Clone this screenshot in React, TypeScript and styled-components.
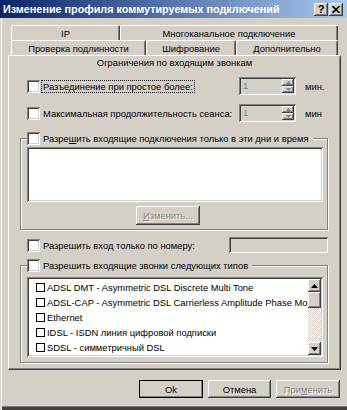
import React from "react";
import styled, { createGlobalStyle } from "styled-components";

const face = "#d4d0c8";
const shade = "#808080";
const dark = "#404040";

const raised = `inset -1px -1px ${dark}, inset 1px 1px #fff, inset -2px -2px ${shade}, inset 2px 2px ${face}`;
const sunken = `inset 1px 1px ${shade}, inset -1px -1px #fff, inset 2px 2px ${dark}, inset -2px -2px ${face}`;

const GlobalStyle = createGlobalStyle`
  html, body {
    margin: 0;
    padding: 0;
    background: ${face};
  }
  body {
    font-family: "Liberation Sans", Arial, sans-serif;
    font-size: 9.4px;
    color: #000;
  }
  * {
    box-sizing: border-box;
  }
`;

const Window = styled.div`
  width: 347px;
  height: 410px;
  background: ${face};
  display: flex;
  flex-direction: column;
  box-shadow: inset 1px 0 ${face}, inset 2px 0 #fff, inset 0 -3px ${dark},
    inset 0 -4px ${shade};
`;

const TitleBar = styled.div`
  height: 18px;
  flex: none;
  display: flex;
  align-items: center;
  padding: 0 4px 0 3px;
  background: linear-gradient(to right, #0a246a, #a6caf0);
`;

const Title = styled.span`
  flex: 1;
  color: #fff;
  font-weight: bold;
  font-size: 10.8px;
  white-space: nowrap;
`;

const CaptionButton = styled.div`
  width: 14px;
  height: 13px;
  margin-left: 1px;
  background: ${face};
  box-shadow: ${raised};
  display: flex;
  align-items: center;
  justify-content: center;
  font-weight: bold;
  font-size: 11px;
  line-height: 1;
`;

const Body = styled.div`
  flex: 1;
  display: flex;
  flex-direction: column;
  padding: 7px 6px 0 8px;
`;

const TabRow = styled.div<{ $inset: number; $h: number }>`
  display: flex;
  height: ${(p) => p.$h}px;
  margin: 0 ${(p) => p.$inset}px;
`;

const Tab = styled.div<{ $w?: number }>`
  width: ${(p) => (p.$w ? `${p.$w}px` : "auto")};
  flex: ${(p) => (p.$w ? "none" : "1")};
  display: flex;
  align-items: center;
  justify-content: center;
  border-top: 1px solid #fff;
  border-left: 1px solid #fff;
  border-right: 1px solid ${dark};
  border-radius: 2px 2px 0 0;
  box-shadow: inset -1px 0 ${shade};
  white-space: nowrap;
`;

const Panel = styled.div`
  height: 301px;
  flex: none;
  display: flex;
  flex-direction: column;
  padding: 8px 12px 0 11px;
  border-left: 1px solid #fff;
  border-right: 1px solid ${dark};
  border-bottom: 1px solid ${dark};
  box-shadow: inset -1px -1px ${shade};
`;

const FieldRow = styled.div<{ $mt: number; $h: number }>`
  display: flex;
  align-items: center;
  height: ${(p) => p.$h}px;
  margin-top: ${(p) => p.$mt}px;
  padding-left: 7px;
  white-space: nowrap;
`;

const Check = styled.span`
  width: 13px;
  height: 13px;
  flex: none;
  background: #fff;
  box-shadow: ${sunken};
`;

const Label = styled.span<{ $focus?: boolean }>`
  margin-left: 1px;
  padding: 0 1px;
  line-height: 11px;
  border: 1px dotted ${(p) => (p.$focus ? "#000" : "transparent")};
`;

const Spin = styled.div`
  width: 57px;
  height: 18px;
  margin-left: auto;
  padding: 2px;
  display: flex;
  background: ${face};
  box-shadow: ${sunken};
`;

const SpinValue = styled.span`
  flex: 1;
  color: ${shade};
  padding-left: 2px;
  line-height: 14px;
`;

const SpinButtons = styled.div`
  width: 12px;
  display: flex;
  flex-direction: column;
`;

const SpinButton = styled.div`
  flex: 1;
  background: ${face};
  box-shadow: ${raised};
  display: flex;
  align-items: center;
  justify-content: center;
`;

const Unit = styled.span`
  width: 23px;
  margin-left: 9px;
`;

const Group = styled.fieldset<{ $mt: number; $pt: number; $pb: number }>`
  margin: ${(p) => p.$mt}px 0 0;
  padding: ${(p) => p.$pt}px 4px ${(p) => p.$pb}px 6px;
  min-width: 0;
  border: 1px solid ${shade};
  box-shadow: inset 1px 1px #fff, 1px 1px #fff;
`;

const GroupLegend = styled.legend`
  margin: 0;
  padding: 0 2px 0 0;
  height: 13px;
  display: flex;
  align-items: center;
  background: ${face};
  white-space: nowrap;
`;

const WhiteBox = styled.div<{ $h: number }>`
  height: ${(p) => p.$h}px;
  background: #fff;
  box-shadow: ${sunken};
`;

const PushButton = styled.div<{ $w: number; $h: number; $disabled?: boolean; $default?: boolean }>`
  width: ${(p) => p.$w}px;
  height: ${(p) => p.$h}px;
  flex: none;
  display: flex;
  align-items: center;
  justify-content: center;
  background: ${face};
  color: ${(p) => (p.$disabled ? shade : "#000")};
  text-shadow: ${(p) => (p.$disabled ? "1px 1px #fff" : "none")};
  box-shadow: ${(p) => (p.$default ? `inset 0 0 0 1px #000, ` : "")}${raised};
  white-space: nowrap;
`;

const ChangeButton = styled(PushButton)`
  margin: 4px 0 0 109px;
`;

const NumberField = styled.div`
  width: 99px;
  height: 16px;
  margin-left: auto;
  background: ${face};
  box-shadow: ${sunken};
`;

const TypeList = styled.div`
  height: 80px;
  display: flex;
  padding: 2px;
  background: #fff;
  box-shadow: ${sunken};
`;

const TypeItems = styled.div`
  flex: 1;
  min-width: 0;
  overflow: hidden;
  padding: 1px 0 0 7px;
`;

const TypeItem = styled.div`
  height: 15px;
  display: flex;
  align-items: center;
  white-space: nowrap;
`;

const ItemBox = styled.span`
  width: 9px;
  height: 9px;
  margin-right: 2px;
  flex: none;
  border: 1px solid #000;
`;

const ScrollBar = styled.div`
  width: 13px;
  flex: none;
  display: flex;
  flex-direction: column;
`;

const ScrollButton = styled.div<{ $h: number }>`
  height: ${(p) => p.$h}px;
  flex: none;
  background: ${face};
  box-shadow: ${raised};
  display: flex;
  align-items: center;
  justify-content: center;
`;

const ScrollTrack = styled.div`
  flex: 1;
  background: repeating-conic-gradient(#fff 0 25%, ${face} 0 50%) 0 0 / 2px 2px;
`;

const ButtonBar = styled.div`
  display: flex;
  justify-content: flex-end;
  gap: 5px;
  margin-top: 10px;
  padding-right: 1px;
`;

const Arrow = ({ up }: { up?: boolean }) => (
  <svg width="7" height="4" viewBox="0 0 7 4">
    <polygon points={up ? "3.5,0 7,4 0,4" : "0,0 7,0 3.5,4"} fill="#000" />
  </svg>
);

const SmallArrow = ({ up }: { up?: boolean }) => (
  <svg width="5" height="3" viewBox="0 0 5 3">
    <polygon points={up ? "2.5,0 5,3 0,3" : "0,0 5,0 2.5,3"} fill={shade} />
  </svg>
);

const SpinBox: React.FC = () => (
  <Spin>
    <SpinValue>1</SpinValue>
    <SpinButtons>
      <SpinButton>
        <SmallArrow up />
      </SpinButton>
      <SpinButton>
        <SmallArrow />
      </SpinButton>
    </SpinButtons>
  </Spin>
);

const types = [
  "ADSL DMT - Asymmetric DSL Discrete Multi Tone",
  "ADSL-CAP - Asymmetric DSL Carrierless Amplitude Phase Modulation",
  "Ethernet",
  "IDSL - ISDN линия цифровой подписки",
  "SDSL - симметричный DSL",
];

const App: React.FC = () => {
  return (
    <>
      <GlobalStyle />
      <Window>
        <TitleBar>
          <Title>Изменение профиля коммутируемых подключений</Title>
          <CaptionButton>?</CaptionButton>
          <CaptionButton>
            <svg width="8" height="7" viewBox="0 0 8 7">
              <path d="M0.5 0 L7.5 7 M7.5 0 L0.5 7" stroke="#000" strokeWidth="1.6" />
            </svg>
          </CaptionButton>
        </TitleBar>
        <Body>
          <TabRow $inset={3} $h={15}>
            <Tab $w={109}>IP</Tab>
            <Tab>Многоканальное подключение</Tab>
          </TabRow>
          <TabRow $inset={3} $h={15}>
            <Tab $w={135}>Проверка подлинности</Tab>
            <Tab $w={90}>Шифрование</Tab>
            <Tab>Дополнительно</Tab>
          </TabRow>
          <TabRow $inset={0} $h={14}>
            <Tab>Ограничения по входящим звонкам</Tab>
          </TabRow>
          <Panel>
            <FieldRow $mt={0} $h={18}>
              <Check />
              <Label $focus>Разъединение при простое более:</Label>
              <SpinBox />
              <Unit>мин.</Unit>
            </FieldRow>
            <FieldRow $mt={9} $h={18}>
              <Check />
              <Label>Максимальная продолжительность сеанса:</Label>
              <SpinBox />
              <Unit>мин</Unit>
            </FieldRow>
            <Group $mt={10} $pt={2} $pb={4}>
              <GroupLegend>
                <Check />
                <Label>
                  Разре<u>ш</u>ить входящие подключения только в эти дни и время
                </Label>
              </GroupLegend>
              <WhiteBox $h={55} />
              <ChangeButton $w={64} $h={19} $disabled>
                <span>
                  <u>И</u>зменить...
                </span>
              </ChangeButton>
            </Group>
            <FieldRow $mt={7} $h={16}>
              <Check />
              <Label>Разрешить вход только по номеру:</Label>
              <NumberField />
            </FieldRow>
            <Group $mt={6} $pt={5} $pb={5}>
              <GroupLegend>
                <Check />
                <Label>Разрешить входящие звонки следующих типов</Label>
              </GroupLegend>
              <TypeList>
                <TypeItems>
                  {types.map((t) => (
                    <TypeItem key={t}>
                      <ItemBox />
                      {t}
                    </TypeItem>
                  ))}
                </TypeItems>
                <ScrollBar>
                  <ScrollButton $h={13}>
                    <Arrow up />
                  </ScrollButton>
                  <ScrollButton $h={16} />
                  <ScrollTrack />
                  <ScrollButton $h={13}>
                    <Arrow />
                  </ScrollButton>
                </ScrollBar>
              </TypeList>
            </Group>
          </Panel>
          <ButtonBar>
            <PushButton $w={64} $h={18} $default>
              Ok
            </PushButton>
            <PushButton $w={63} $h={18}>
              Отмена
            </PushButton>
            <PushButton $w={64} $h={18} $disabled>
              <span>
                При<u>м</u>енить
              </span>
            </PushButton>
          </ButtonBar>
        </Body>
      </Window>
    </>
  );
};

export default App;
